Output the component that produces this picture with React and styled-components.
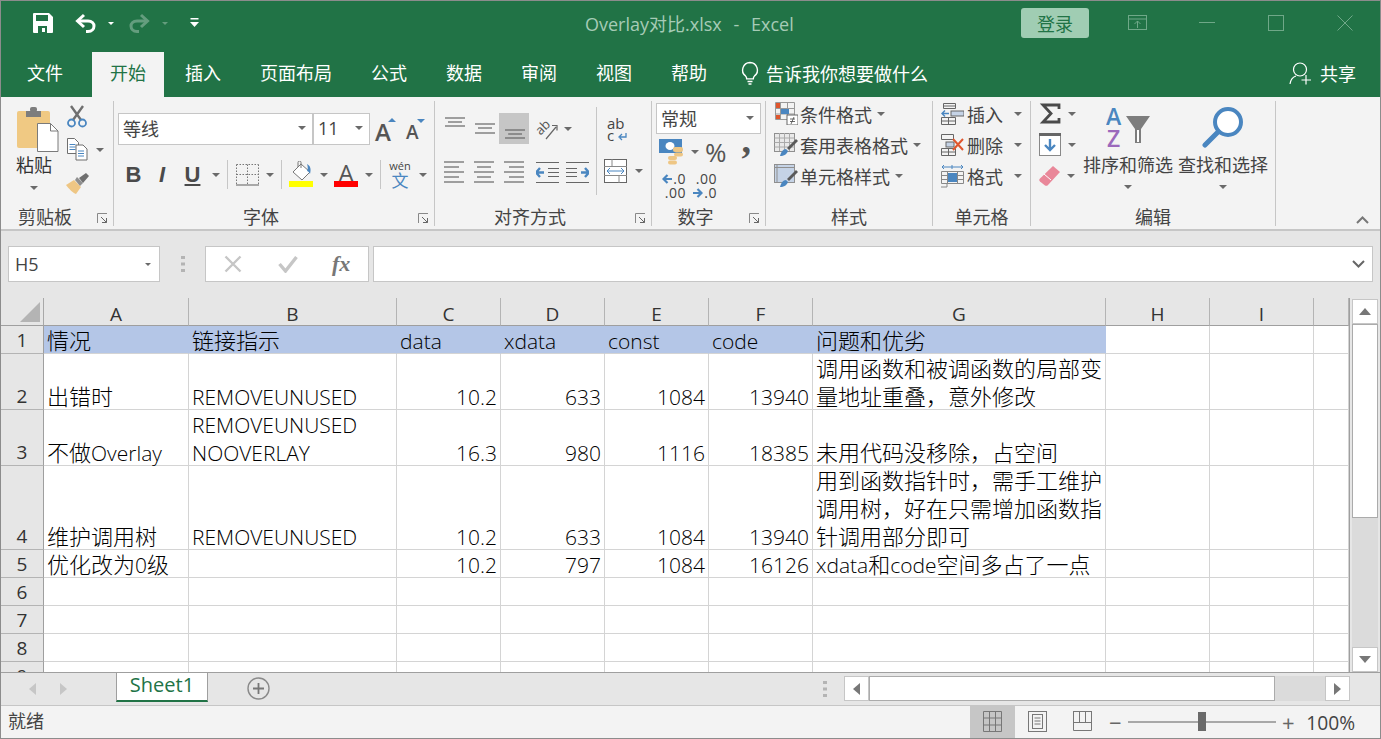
import React from 'react'
import styled, { createGlobalStyle } from 'styled-components'

const GlobalStyle = createGlobalStyle`
  html, body { margin: 0; padding: 0; width: 1381px; height: 739px; overflow: hidden; background: #fff; }
  * { box-sizing: border-box; }
  body { font-family: "Noto Sans CJK SC", "Open Sans", sans-serif; color: #444; }
`

const GREEN = '#217346'
const LINE = '#c6c6c6'
const BLUE = '#4a86c0'

const Window = styled.div`
  width: 1381px; height: 739px;
  border: 1px solid #8c8c8c;
  display: flex; flex-direction: column;
  background: #e6e6e6;
  overflow: hidden;
`
const TitleBar = styled.div`
  height: 44px; flex: none; background: ${GREEN};
  display: flex; align-items: center;
`
const Qat = styled.div`
  width: 584px; flex: none; height: 100%;
  padding-left: 32px;
  display: flex; align-items: center;
`
const QatSlot = styled.div`
  display: flex; align-items: center; justify-content: center;
  margin-left: ${p => p.$ml || 0}px;
  opacity: ${p => p.$dim ? 0.3 : 1};
`
const Title = styled.div`
  font-size: 18px; color: #a6cbb6; white-space: pre; word-spacing: 1.2px;
  font-family: "Open Sans", "Noto Sans CJK SC", sans-serif;
`
const WinControls = styled.div`
  margin-left: auto; display: flex; align-items: center; height: 100%;
`
const SignIn = styled.div`
  width: 68px; height: 30px; border-radius: 3px; background: #a0cdb3; color: ${GREEN};
  font-size: 18px; line-height: 30px; text-align: center;
`
const WinBtn = styled.div`
  width: ${p => p.$w || 69}px; display: flex; align-items: center; justify-content: center;
  margin-left: ${p => p.$ml || 0}px;
`
const TabBar = styled.div`
  height: 52px; flex: none; background: ${GREEN};
  display: flex; align-items: flex-end; padding-left: 8px; gap: 3px;
`
const Tab = styled.div`
  height: 45px; padding: 0 18px; font-size: 18px; line-height: 41px;
  color: ${p => p.$active ? GREEN : '#fff'};
  background: ${p => p.$active ? '#f3f3f3' : 'transparent'};
  margin-right: ${p => p.$mr || 0}px;
`
const TellMe = styled.div`
  height: 45px; margin-left: 12px; display: flex; align-items: center; gap: 6px;
  padding-bottom: 3px;
  color: #fff; font-size: 18px;
`
const Share = styled.div`
  height: 45px; margin-left: auto; padding-right: 24px; padding-bottom: 3px;
  display: flex; align-items: center; gap: 8px;
  color: #fff; font-size: 18px;
`
const Ribbon = styled.div`
  height: 134px; flex: none; background: #f3f3f3;
  border-bottom: 2px solid ${LINE};
  display: flex; padding-top: 4px;
  position: relative;
`
const Group = styled.div`
  width: ${p => p.$w}px; height: 125px; flex: none;
  border-right: 1px solid ${LINE};
  display: flex; flex-direction: column;
  position: relative;
`
const GroupBody = styled.div`
  flex: 1; display: flex; min-height: 0;
`
const GroupLabel = styled.div`
  height: 20px; line-height: 20px; font-size: 18px; text-align: center; color: #444;
  padding-right: ${p => p.$pr || 0}px;
`
const Launcher = styled.div`
  position: absolute; right: 5px; bottom: 2px; width: 11px; height: 11px; display: flex;
`
const Collapse = styled.div`
  position: absolute; right: 11px; bottom: 5px; display: flex;
`
const Caret = styled.div`
  flex: none; width: 0; height: 0;
  border-left: ${p => p.$s || 4}px solid transparent;
  border-right: ${p => p.$s || 4}px solid transparent;
  border-top: ${p => p.$s || 4}px solid ${p => p.$c || '#6a6a6a'};
  margin-left: ${p => p.$ml || 0}px;
  margin-top: ${p => p.$mt || 0}px;
`
const PasteCol = styled.div`
  width: 42px; margin-left: 16px; padding-top: 5px; flex: none;
  display: flex; flex-direction: column; align-items: flex-start;
`
const PasteText = styled.div`
  font-size: 18px; line-height: 24px; white-space: nowrap; color: #333; margin-left: -1px;
`
const PasteCaret = styled.div`
  width: 36px; display: flex; justify-content: center; margin-top: 10px; margin-left: -1px;
`
const ClipTools = styled.div`
  margin-left: 8px; padding-top: 4px;
  display: flex; flex-direction: column; gap: 10px;
`
const ClipTool = styled.div`
  height: 23px; display: flex; align-items: center; margin-left: ${p => p.$ml || 0}px;
`
const FontCol = styled.div`
  padding: 12px 0 0 4px; display: flex; flex-direction: column; gap: 15px;
`
const Row = styled.div`
  display: flex; align-items: center; height: ${p => p.$h ? p.$h + 'px' : 'auto'};
  margin-left: ${p => p.$ml || 0}px;
  margin-top: ${p => p.$mt || 0}px;
`
const SelectBox = styled.div`
  width: ${p => p.$w}px; height: ${p => p.$h || 32}px; flex: none;
  background: #fff; border: 1px solid ${LINE};
  display: flex; align-items: center; padding: 0 6px 2px 4px;
  font-size: 18px; color: #444;
  justify-content: space-between;
`
const SizeText = styled.span`
  font-family: "Open Sans", sans-serif; font-size: 18px;
`
const BigA = styled.div`
  position: relative; width: 21px; height: 32px; margin-left: ${p => p.$ml || 0}px;
  font: 600 ${p => p.$fs}px/38px "Open Sans", sans-serif; color: #555; text-align: left;
`
const MiniTri = styled.i`
  position: absolute; right: ${p => p.$right || 0}px; top: ${p => p.$top}px; width: 0; height: 0;
  border-left: 4px solid transparent; border-right: 4px solid transparent;
  ${p => p.$up ? `border-bottom: 4px solid ${BLUE};` : `border-top: 4px solid ${BLUE};`}
`
const StyleGlyph = styled.span`
  width: ${p => p.$w}px; margin-left: ${p => p.$ml || 0}px; text-align: center; color: #4a4a4a;
  font: ${p => p.$italic ? 'italic' : 'normal'} 700 22px/28px "Liberation Sans", sans-serif;
  text-decoration: ${p => p.$under ? 'underline' : 'none'};
`
const VSep = styled.div`
  width: 1px; height: ${p => p.$h || 29}px; background: ${LINE}; flex: none;
  margin-left: ${p => p.$ml || 0}px;
  margin-right: ${p => p.$mr || 0}px;
`
const Swatch = styled.div`
  position: relative; width: 24px; height: 28px; margin-left: ${p => p.$ml || 0}px; flex: none;
  display: flex; justify-content: center;
  &::after {
    content: ''; position: absolute; left: 0; right: 0; bottom: 2px; height: 6px; background: ${p => p.$color};
  }
`
const SwatchA = styled.span`
  font: 400 24px/24px "Open Sans", sans-serif; color: #555;
`
const Wen = styled.div`
  width: 22px; margin-left: ${p => p.$ml || 0}px; text-align: center; display: flex; flex-direction: column; align-items: center;
`
const WenTop = styled.span`
  font: 400 11px/11px "Open Sans", sans-serif; color: #444;
`
const WenBottom = styled.span`
  font-size: 17px; line-height: 18px; color: ${BLUE};
`
const AlignCol = styled.div`
  width: 161px; flex: none; padding: 12px 0 0 4px;
`
const AlignSlot = styled.div`
  width: 30px; height: ${p => p.$h || 31}px; flex: none;
  display: flex; align-items: center; justify-content: center;
  background: ${p => p.$on ? '#c6c6c6' : 'transparent'};
  margin-left: ${p => p.$ml || 0}px;
`
const WrapCol = styled.div`
  margin-top: 6px; height: 88px; border-left: 1px solid ${LINE}; padding-top: 10px;
  display: flex; flex-direction: column; flex: 1;
`
const WrapText = styled.div`
  margin-left: 10px; width: 24px; text-align: left;
  font: 400 15px/12px "Open Sans", sans-serif; color: #444;
`
const WrapMark = styled.span`
  display: inline-block;
`
const MergeRow = styled.div`
  margin: 18px 0 0 7px; display: flex; align-items: center;
`
const NumCol = styled.div`
  padding: 2px 0 0 4px; display: flex; flex-direction: column; width: 100%;
`
const Percent = styled.span`
  font: 400 26px/26px "Open Sans", sans-serif; color: #555; margin-left: 6px;
`
const Comma = styled.span`
  font: 700 38px/26px "Liberation Serif", serif; color: #555; margin-left: 15px; position: relative; top: -12px;
`
const DecBlock = styled.div`
  width: 28px; margin-left: ${p => p.$ml || 0}px; display: flex; flex-direction: column;
  font: 400 14px/14px "Open Sans", sans-serif; color: #444; text-align: right; letter-spacing: 0.5px;
`
const DecLine = styled.div`
  display: flex; justify-content: flex-end; align-items: center; gap: 1px; height: 14px;
`
const ListCol = styled.div`
  padding: 0 0 0 8px; margin-top: -3px; width: ${p => p.$w ? p.$w + 'px' : 'auto'}; flex: none;
  display: flex; flex-direction: column;
`
const ListRow = styled.div`
  height: 31px; display: flex; align-items: center; font-size: 18px; color: #444; white-space: nowrap;
`
const ListIcon = styled.div`
  width: ${p => p.$w || 24}px; margin-right: ${p => p.$mr || 2}px; flex: none; display: flex; justify-content: center;
`
const BigTool = styled.div`
  width: 90px; margin-left: ${p => p.$ml || 0}px; flex: none;
  display: flex; flex-direction: column; align-items: center;
`
const BigIcon = styled.div`
  height: 50px; padding-top: 5px; display: flex; align-items: flex-start; justify-content: center;
`
const BigText = styled.div`
  font-size: 18px; line-height: 24px; white-space: nowrap; color: #444; margin-top: 1px;
`
const FormulaBar = styled.div`
  height: 67px; flex: none; padding: 15px 7px 0 7px;
  display: flex; align-items: flex-start; background: #e6e6e6;
`
const NameBox = styled.div`
  width: 152px; height: 36px; background: #fff; border: 1px solid ${LINE};
  display: flex; align-items: center; justify-content: space-between; padding: 0 8px 0 6px;
  font: 400 18px "Open Sans", sans-serif; color: #444;
`
const Grip = styled.div`
  width: 45px; height: 36px; flex: none; display: flex; align-items: center; justify-content: center;
`
const FxBox = styled.div`
  width: 164px; height: 36px; background: #fff; border: 1px solid ${LINE};
  display: flex; align-items: center; padding-left: 18px; gap: 36px;
`
const FxText = styled.span`
  font: italic 700 22px "Liberation Serif", serif; color: #777; margin-left: -2px;
`
const FormulaInput = styled.div`
  flex: 1; height: 36px; margin-left: 4px; background: #fff; border: 1px solid ${LINE};
  display: flex; align-items: center; justify-content: flex-end; padding-right: 7px;
`
const SheetArea = styled.div`
  height: 374px; flex: none; display: flex;
`
const Grid = styled.div`
  width: 1349px; height: 374px; flex: none; overflow: hidden; background: #fff;
  display: grid;
  grid-template-columns: 43px 145px 208px 104px 104px 104px 104px 293px 104px 104px 35px;
  grid-template-rows: 28px 28px 56px 56px 84px 28px 28px 28px 28px 28px;
  border-right: 1px solid #9f9f9f;
`
const Corner = styled.div`
  background: #e6e6e6; border-right: 1px solid #a8a8a8; border-bottom: 1px solid #9f9f9f;
  display: flex; align-items: flex-end; justify-content: flex-end; padding: 0 3px 3px 0;
`
const ColHead = styled.div`
  background: #e6e6e6; border-right: 1px solid #b4b4b4; border-bottom: 1px solid #9f9f9f;
  padding-top: 3px;
  text-align: center; font: 400 19px/27px "Open Sans", sans-serif; color: #333;
`
const RowHead = styled.div`
  background: #e6e6e6; border-right: 1px solid #9f9f9f; border-bottom: 1px solid #b4b4b4;
  display: flex; align-items: flex-end; justify-content: center; font: 400 19px/25px "Open Sans", sans-serif; color: #333;
`
const Cell = styled.div`
  background: ${p => p.$fill ? '#b4c6e7' : '#fff'};
  border-right: 1px solid ${p => p.$fill ? '#b4c6e7' : '#d4d4d4'};
  border-bottom: 1px solid #d4d4d4;
  padding: 0 3px 0 3px; color: #000; white-space: nowrap;
  display: flex; flex-direction: column; justify-content: flex-end;
  align-items: ${p => p.$num ? 'flex-end' : 'flex-start'};
  font: 300 21px/28px "Open Sans", sans-serif;
`
const CellLine = styled.div`
  height: 28px; line-height: 29px;
`
const Han = styled.span`
  font-family: "Noto Sans CJK SC", sans-serif; font-size: 22px; font-weight: 300;
`
const VScroll = styled.div`
  flex: 1; padding: 1px 2px 0 2px; display: flex; flex-direction: column; background: #e6e6e6; position: relative;
`
const ScrollBtn = styled.div`
  flex: none; width: ${p => p.$w ? p.$w + 'px' : '100%'}; height: ${p => p.$h || 25}px; background: #fff; border: 1px solid ${LINE};
  display: flex; align-items: center; justify-content: center;
`
const VThumb = styled.div`
  height: 194px; flex: none; background: #fff; border: 1px solid #ababab;
`
const VTrack = styled.div`
  flex: 1; background: #dbdbdb;
`
const SheetBar = styled.div`
  height: 33px; flex: none; background: #e6e6e6; border-top: 1px solid #9f9f9f;
  display: flex; align-items: flex-start;
`
const SheetNav = styled.div`
  width: 115px; height: 100%; padding-left: 28px; display: flex; align-items: center; gap: 24px; flex: none;
`
const NavTri = styled.div`
  width: 0; height: 0; border-top: 6px solid transparent; border-bottom: 6px solid transparent;
  ${p => p.$left ? 'border-right: 7px solid #c6c6c6;' : 'border-left: 7px solid #c6c6c6;'}
`
const SheetTab = styled.div`
  width: 92px; height: 29px; background: #fff; color: ${GREEN};
  border-left: 1px solid #9f9f9f; border-right: 1px solid #9f9f9f; border-bottom: 2px solid ${GREEN};
  text-align: center; font: 400 20px/23px "Open Sans", sans-serif; flex: none;
`
const AddSheet = styled.div`
  width: 100px; height: 100%; display: flex; align-items: center; padding-left: 39px; flex: none; padding-bottom: 2px;
`
const HGrip = styled.div`
  margin-left: auto; width: 29px; height: 100%; display: flex; align-items: center; justify-content: flex-start; padding-left: 8px;
`
const HScroll = styled.div`
  width: 506px; height: 25px; margin-top: 3px; margin-right: 30px; display: flex; flex: none; background: #dbdbdb;
`
const HThumb = styled.div`
  width: 406px; height: 100%; background: #fff; border: 1px solid #ababab; flex: none;
`
const StatusBar = styled.div`
  flex: 1; background: #f3f3f3; border-top: 1px solid ${LINE};
  display: flex; align-items: center; padding-left: 7px; font-size: 18px; color: #444;
`
const StatusText = styled.span`
  position: relative; top: -2px;
`
const StatusRight = styled.div`
  margin-left: auto; display: flex; align-items: center; height: 100%;
`
const ViewBtn = styled.div`
  width: 45px; height: 100%; display: flex; align-items: center; justify-content: center;
  padding-bottom: 2px;
  background: ${p => p.$on ? '#c6c6c6' : 'transparent'};
`
const ZoomTrack = styled.div`
  position: relative; width: 148px; height: 2px; background: #a8a8a8; margin: 0 5px 0 6px;
`
const ZoomThumb = styled.div`
  position: absolute; left: 70px; top: -9px; width: 8px; height: 19px; background: #6a6a6a;
`
const ZoomSign = styled.span`
  font: 400 22px/22px "Open Sans", sans-serif; color: #666; width: 14px; text-align: center;
  margin-left: ${p => p.$ml || 0}px;
`
const ZoomPct = styled.span`
  font: 400 19.2px "Open Sans", sans-serif; color: #444; margin: 0 25px 0 11px;
`

const Svg = ({ w, h, children }) => (
  <svg width={w} height={h} viewBox={`0 0 ${w} ${h}`} fill="none" style={{ display: 'block', flex: 'none' }}>{children}</svg>
)

const SaveIcon = () => (
  <Svg w={20} h={20}>
    <path d="M1 0h15l4 4v15a1 1 0 0 1-1 1H1a1 1 0 0 1-1-1V1a1 1 0 0 1 1-1z" fill="#fff" />
    <rect x="3" y="2" width="12" height="6" fill={GREEN} />
    <rect x="5" y="13" width="9" height="7" fill={GREEN} />
    <rect x="9" y="15" width="3" height="4" fill="#fff" />
  </Svg>
)
const UndoIcon = ({ flip }) => (
  <Svg w={22} h={20}>
    <g transform={flip ? 'translate(22 0) scale(-1 1)' : undefined} stroke="#fff" strokeWidth="3" fill="none">
      <path d="M9 2L2.5 8l6.5 6" />
      <path d="M3 8h10c4 0 6 2.5 6 5s-2 5.5-6 5.5H11" />
    </g>
  </Svg>
)
const QatMore = () => (
  <Svg w={9} h={10}>
    <rect x="0.5" y="0" width="8" height="1.5" fill="#fff" />
    <path d="M0 4h9L4.5 9z" fill="#fff" />
  </Svg>
)
const RibbonOpts = () => (
  <Svg w={20} h={16}>
    <rect x="0.5" y="0.5" width="18" height="14" stroke="#6fa888" />
    <path d="M0 4h19M9.5 13V6M6.5 9l3-3 3 3" stroke="#6fa888" />
  </Svg>
)
const MinIcon = () => <Svg w={16} h={2}><rect width="16" height="1" fill="#6fa888" /></Svg>
const MaxIcon = () => <Svg w={16} h={16}><rect x="0.5" y="0.5" width="15" height="15" stroke="#6fa888" /></Svg>
const CloseIcon = () => <Svg w={16} h={16}><path d="M0.5 0.5l15 15M15.5 0.5l-15 15" stroke="#6fa888" /></Svg>
const Bulb = () => (
  <Svg w={20} h={24}>
    <path d="M10 1.5a7.5 7.5 0 0 0-4.5 13.4c.9.8 1.2 1.6 1.2 3h6.6c0-1.4.3-2.2 1.2-3A7.5 7.5 0 0 0 10 1.5z" stroke="#fff" strokeWidth="1.4" />
    <path d="M7.5 20.5h5M8.5 23h3" stroke="#fff" strokeWidth="1.4" />
  </Svg>
)
const UserAdd = () => (
  <Svg w={23} h={23}>
    <circle cx="11" cy="7.5" r="6.5" stroke="#fff" strokeWidth="1.2" />
    <path d="M1 22c.5-4 3-7 6-8" stroke="#fff" strokeWidth="1.2" />
    <path d="M17 13v9.5M12.5 18h9.5" stroke="#fff" strokeWidth="1.2" />
  </Svg>
)
const PasteIcon = () => (
  <Svg w={42} h={46}>
    <rect x="0" y="5" width="33" height="37" rx="2" fill="#f0c983" />
    <rect x="9" y="5" width="15" height="6" fill="#7d7d7d" />
    <rect x="13" y="1" width="7" height="5" rx="2" fill="#7d7d7d" />
    <path d="M20.5 17.5h13l7.5 7.5v20.5H20.5z" fill="#fff" stroke="#7a7a7a" />
    <path d="M33.5 17.5v7.5H41" stroke="#7a7a7a" />
  </Svg>
)
const ScissorsIcon = () => (
  <Svg w={20} h={23}>
    <path d="M4 1l10 14M16 1L6 15" stroke="#6f6f6f" strokeWidth="2.4" />
    <circle cx="4.5" cy="18" r="3.5" stroke={BLUE} strokeWidth="1.8" />
    <circle cx="15.5" cy="18" r="3.5" stroke={BLUE} strokeWidth="1.8" />
  </Svg>
)
const Doc = ({ x, y }) => (
  <g transform={`translate(${x} ${y})`}>
    <path d="M.5.5h7l4 4v11H.5z" fill="#fff" stroke="#6f6f6f" />
    <path d="M2.5 6.5h6M2.5 9h6M2.5 11.5h6" stroke={BLUE} />
  </g>
)
const CopyIcon = () => <Svg w={21} h={23}><Doc x={0} y={0} /><Doc x={8.5} y={6.5} /></Svg>
const BrushIcon = () => (
  <Svg w={24} h={22}>
    <path d="M0 13l8-5 7 7-5 7c-3-1-7-5-10-9z" fill="#eec684" />
    <path d="M9 8l2-3 6 6-3 3z" fill="#8f8f8f" />
    <path d="M13 6l7-5 3 3-6 7z" fill="#6f6f6f" />
  </Svg>
)
const BorderIcon = () => (
  <Svg w={23} h={22}>
    <path d="M.5.5h22M.5.5v20M22.5.5v20M11.5.5v20M.5 10.5h22" stroke="#777" strokeDasharray="1.5 1.5" />
    <path d="M0 21h23" stroke="#777" strokeWidth="1.2" />
  </Svg>
)
const FillIcon = () => (
  <Svg w={24} h={21}>
    <path d="M12 3l9 8-8 8-9-8z" fill="#fff" stroke="#777" />
    <path d="M9 6V1.5a1.5 1.5 0 0 1 3 0V7" stroke="#777" />
    <path d="M18 3c3 1.5 4.5 4.5 3 10-1-2-2-3-3-3 1-2 1-4 0-7z" fill={BLUE} />
  </Svg>
)
const AlignIcon = ({ lines }) => (
  <Svg w={22} h={26}>
    {lines.map(([a, b, y], i) => <path key={i} d={`M${a} ${y}h${b - a}`} stroke="#666" strokeWidth="1.2" />)}
  </Svg>
)
const OrientIcon = () => (
  <Svg w={22} h={22}>
    <text x="0" y="13" transform="rotate(-45 8 10)" fontFamily="Open Sans" fontSize="13" fill="#555">ab</text>
    <path d="M10 21L20 9M16 7.5l5 0 0 5" stroke="#666" strokeWidth="1.2" />
  </Svg>
)
const IndentIcon = ({ flip }) => (
  <Svg w={23} h={26}>
    <g transform={flip ? 'translate(23 0) scale(-1 1)' : undefined}>
      <path d="M0 3.5h23M0 23.5h23M12 9.5h11M12 13.5h11M12 17.5h11" stroke="#666" strokeWidth="1.2" />
      <path d="M0 13.5h8M4 9l-4 4.5 4 4.5" stroke={BLUE} strokeWidth="2.4" />
    </g>
  </Svg>
)
const WrapArrow = () => (
  <Svg w={9} h={8}><path d="M8 0v4H2M4 1L1 4l3 3" stroke={BLUE} strokeWidth="1.3" /></Svg>
)
const MergeIcon = () => (
  <Svg w={23} h={24}>
    <rect x=".5" y=".5" width="22" height="23" fill="#fff" stroke="#666" />
    <path d="M0 7.5h23M0 16.5h23M8 0v7M15 16v8" stroke="#888" />
    <rect x="1" y="8" width="21" height="8" fill="#fff" />
    <path d="M3 12h17M6 9l-3 3 3 3M17 9l3 3-3 3" stroke={BLUE} />
  </Svg>
)
const MoneyIcon = () => (
  <Svg w={25} h={26}>
    <rect x="0" y="0" width="23" height="14" fill={BLUE} />
    <ellipse cx="11" cy="7" rx="4.5" ry="4" fill="#fff" />
    <rect x="14" y="8" width="10" height="5" rx="2" fill="#eec684" />
    <rect x="15" y="13.5" width="9" height="4" rx="2" fill="#eec684" />
    <rect x="9" y="17" width="9" height="4" rx="2" fill="#eec684" />
    <rect x="9" y="21.5" width="9" height="4" rx="2" fill="#eec684" />
  </Svg>
)
const SmallArrow = ({ left }) => (
  <Svg w={10} h={10}>
    {left
      ? <path d="M10 5H2M5.5 1L1.5 5l4 4" stroke={BLUE} strokeWidth="2.2" />
      : <path d="M0 5h8M4.5 1l4 4-4 4" stroke={BLUE} strokeWidth="2.2" />}
  </Svg>
)
const CondIcon = () => (
  <Svg w={23} h={23}>
    <path d="M.5.5h19v17H.5zM.5 6.5h19M.5 12h19M5.5 0v18M12.5 0v18" stroke="#999" />
    <rect x="1" y="1" width="4" height="5" fill="#e0562d" />
    <rect x="6" y="7" width="8" height="5" fill={BLUE} />
    <rect x="1" y="13" width="4" height="4" fill="#e0562d" />
    <rect x="12" y="13" width="11" height="10" fill="#fff" stroke="#666" />
    <path d="M15 17h5M15 19.5h5M19 15l-3 7" stroke="#444" strokeWidth=".8" />
  </Svg>
)
const TableBrush = ({ plain }) => (
  <Svg w={24} h={24}>
    <rect x=".5" y=".5" width="20" height="18" fill={plain ? '#c5d3e6' : '#e9e9e9'} stroke="#8f8f8f" />
    {plain
      ? <path d="M.5 3.5h20M3 .5v18" stroke="#8f8f8f" />
      : <path d="M.5 5h20M.5 9.5h20M.5 14h20M5.5 0v18M10.5 0v18M15.5 0v18" stroke="#aaa" />}
    <path d="M6 23c1-4 3-7 6-7l2 2c-1 3-4 5-8 5z" fill={BLUE} />
    <path d="M13 15l9-9 2 2-9 9z" fill="#5a5a5a" />
  </Svg>
)
const InsCell = () => (
  <Svg w={23} h={22}>
    <path d="M2.5 .5h12v5h-12zM.5 14.5h14v7H.5zM7.5 14.5v7M.5 18h14M2.5 3h12" stroke="#666" />
    <rect x="10" y="8" width="13" height="5" fill="#c5d3e6" stroke="#666" />
    <path d="M8 10.5H1M4 7.5l-3 3 3 3" stroke={BLUE} strokeWidth="1.5" />
  </Svg>
)
const DelCell = () => (
  <Svg w={24} h={22}>
    <path d="M.5 .5h12v5H.5zM.5 14.5h14v7H.5zM7.5 14.5v7M.5 18h14" stroke="#666" />
    <rect x="5" y="8" width="8" height="5" fill="#c5d3e6" stroke="#666" />
    <path d="M12 5l10 11M22 5L12 16" stroke="#e0562d" strokeWidth="2" />
  </Svg>
)
const FmtCell = () => (
  <Svg w={23} h={24}>
    <path d="M1 3h21M3 1L1 3l2 2M20 1l2 2-2 2M11 1v4" stroke={BLUE} />
    <path d="M.5 7.5h22v12H.5zM.5 11.5h22M.5 15.5h22M6.5 7v13M16.5 7v13M6 20v3H0" stroke="#888" />
    <rect x="7" y="9" width="9" height="9" fill={BLUE} />
  </Svg>
)
const SigmaIcon = () => (
  <Svg w={22} h={21}>
    <path d="M20 6V2H4l8 8.5L4 19h16v-4" stroke="#4a4a4a" strokeWidth="2.8" />
  </Svg>
)
const FillDown = () => (
  <Svg w={22} h={23}>
    <rect x=".5" y=".5" width="21" height="22" fill="#fff" stroke="#888" />
    <rect x="0" y="0" width="22" height="3" fill="#666" />
    <path d="M11 6v11M6 12l5 5 5-5" stroke={BLUE} strokeWidth="2.4" />
  </Svg>
)
const Eraser = () => (
  <Svg w={21} h={20}>
    <path d="M14 0l7 6-12 13c-1 1-2 1-3 .5l-5-4c-1-1-1-2 0-3z" fill="#e98799" />
    <path d="M5 8l7 6" stroke="#fff" />
  </Svg>
)
const SortIcon = () => (
  <Svg w={44} h={42}>
    <text x="0" y="19" fontFamily="Open Sans" fontWeight="600" fontSize="23" fill={BLUE}>A</text>
    <text x="1" y="41" fontFamily="Open Sans" fontWeight="600" fontSize="23" fill="#9b69bc">Z</text>
    <path d="M20 10h24l-9 13v14h-6V23z" fill="#7d7d7d" />
    <path d="M31 24h2v12h-2z" fill="#fff" />
  </Svg>
)
const FindIcon = () => (
  <Svg w={42} h={42}>
    <circle cx="26" cy="16" r="13" fill="#fff" stroke={BLUE} strokeWidth="4" />
    <path d="M16 26L3 39" stroke={BLUE} strokeWidth="5" strokeLinecap="round" />
  </Svg>
)
const LauncherIcon = () => (
  <Svg w={11} h={11}>
    <path d="M.5 10V.5H10" stroke="#888" />
    <path d="M4 4l5.5 5.5M9.5 5v4.5H5" stroke="#666" />
  </Svg>
)
const ChevronUp = () => <Svg w={13} h={8}><path d="M1 7l5.5-5.5L12 7" stroke="#777" strokeWidth="2" /></Svg>
const ChevronDown = () => <Svg w={13} h={8}><path d="M1 1l5.5 5.5L12 1" stroke="#666" strokeWidth="2" /></Svg>
const GripDots = ({ h }) => (
  <Svg w={4} h={h}>
    <rect y="0" width="4" height="3" fill="#b4b4b4" />
    <rect y={(h - 3) / 2} width="4" height="3" fill="#b4b4b4" />
    <rect y={h - 3} width="4" height="3" fill="#b4b4b4" />
  </Svg>
)
const CancelIcon = () => <Svg w={18} h={18}><path d="M1.5 1.5l15 15M16.5 1.5l-15 15" stroke="#c6c6c6" strokeWidth="2.4" /></Svg>
const CheckIcon = () => <Svg w={20} h={18}><path d="M1.5 9l6 7L18.5 2" stroke="#c6c6c6" strokeWidth="3.4" /></Svg>
const CornerTri = () => <Svg w={20} h={20}><path d="M20 0v20H0z" fill="#b4b4b4" /></Svg>
const TriUp = () => <Svg w={12} h={7}><path d="M6 0l6 7H0z" fill="#777" /></Svg>
const TriDown = () => <Svg w={12} h={7}><path d="M6 7l6-7H0z" fill="#777" /></Svg>
const TriLeft = () => <Svg w={7} h={12}><path d="M0 6l7-6v12z" fill="#777" /></Svg>
const TriRight = () => <Svg w={7} h={12}><path d="M7 6L0 0v12z" fill="#777" /></Svg>
const AddCircle = () => (
  <Svg w={23} h={23}>
    <circle cx="11.5" cy="11.5" r="10.5" stroke="#8a8a8a" strokeWidth="1.4" />
    <path d="M11.5 6v11M6 11.5h11" stroke="#777" strokeWidth="1.8" />
  </Svg>
)
const NormalView = () => (
  <Svg w={19} h={21}>
    <path d="M.5.5h18v20H.5zM6.5 0v21M12.5 0v21M0 7h19M0 14h19" stroke="#777" />
  </Svg>
)
const PageView = () => (
  <Svg w={19} h={21}>
    <rect x=".5" y=".5" width="18" height="20" stroke="#777" />
    <rect x="4.5" y="3.5" width="10" height="14" stroke="#777" />
    <path d="M6.5 7h6M6.5 10h6M6.5 13h6" stroke="#777" />
  </Svg>
)
const BreakView = () => (
  <Svg w={19} h={20}>
    <path d="M.5 0v19.5h18V0M.5 11.5h18M6.5 0v11.5M12.5 0v11.5M0 .5h19" stroke="#777" />
  </Svg>
)

const TOP = [[2, 22, 2], [5, 19, 6], [2, 22, 10]]
const MID = [[2, 22, 8], [5, 19, 12], [2, 22, 17]]
const BOT = [[2, 22, 14], [5, 19, 18], [2, 22, 22]]
const LEFT = [[1, 21, 3], [1, 21, 8], [1, 21, 13], [1, 21, 18], [1, 21, 23]]
const CENTER = [[1, 21, 3], [4, 18, 8], [1, 21, 13], [4, 18, 18], [1, 21, 23]]

const TABS = ['插入', '页面布局', '公式', '数据', '审阅', '视图', '帮助']
const COLS = ['A', 'B', 'C', 'D', 'E', 'F', 'G', 'H', 'I', '']
const ROWS = [
  { n: 1, fill: true, cells: ['情况', '链接指示', 'data', 'xdata', 'const', 'code', '问题和优劣'] },
  { n: 2, cells: ['出错时', 'REMOVEUNUSED', 10.2, 633, 1084, 13940, '调用函数和被调函数的局部变\n量地址重叠，意外修改'] },
  { n: 3, cells: ['不做Overlay', 'REMOVEUNUSED\nNOOVERLAY', 16.3, 980, 1116, 18385, '未用代码没移除，占空间'] },
  { n: 4, cells: ['维护调用树', 'REMOVEUNUSED', 10.2, 633, 1084, 13940, '用到函数指针时，需手工维护\n调用树，好在只需增加函数指\n针调用部分即可'] },
  { n: 5, cells: ['优化改为0级', '', 10.2, 797, 1084, 16126, 'xdata和code空间多占了一点'] },
  { n: 6, cells: [] }, { n: 7, cells: [] }, { n: 8, cells: [] }, { n: 9, cells: [] }, { n: 10, cells: [] },
]

// 中文用单独的字号，西文宽度才对得上；空的 Han 让每行基线一致
const mixText = (str) => str.split(/([\u4e00-\u9fff，]+)/).map((part, i) =>
  /[\u4e00-\u9fff，]/.test(part) ? <Han key={i}>{part}</Han> : part
)

const SheetCell = ({ value, fill }) => {
  const isNum = typeof value === 'number'
  const lines = value === undefined || value === '' ? [] : String(value).split('\n')
  return (
    <Cell $fill={fill} $num={isNum}>
      {lines.map((l, i) => <CellLine key={i}><Han />{mixText(l)}</CellLine>)}
    </Cell>
  )
}

const App = () => {
  return (
    <Window>
      <GlobalStyle />
      <TitleBar>
        <Qat>
          <QatSlot><SaveIcon /></QatSlot>
          <QatSlot $ml={22}><UndoIcon /></QatSlot>
          <QatSlot $ml={11}><Caret $s={3.5} $c="#fff" /></QatSlot>
          <QatSlot $ml={14} $dim><UndoIcon flip /></QatSlot>
          <QatSlot $ml={12} $dim><Caret $s={3.5} $c="#fff" /></QatSlot>
          <QatSlot $ml={22}><QatMore /></QatSlot>
        </Qat>
        <Title>Overlay对比.xlsx  -  Excel</Title>
        <WinControls>
          <SignIn>登录</SignIn>
          <WinBtn $ml={14}><RibbonOpts /></WinBtn>
          <WinBtn><MinIcon /></WinBtn>
          <WinBtn><MaxIcon /></WinBtn>
          <WinBtn><CloseIcon /></WinBtn>
          <WinBtn $w={1} />
        </WinControls>
      </TitleBar>

      <TabBar>
        <Tab $mr={8}>文件</Tab>
        <Tab $active>开始</Tab>
        {TABS.map(t => <Tab key={t}>{t}</Tab>)}
        <TellMe><Bulb />告诉我你想要做什么</TellMe>
        <Share><UserAdd />共享</Share>
      </TabBar>

      <Ribbon>
        <Group $w={113}>
          <GroupBody>
            <PasteCol>
              <PasteIcon />
              <PasteText>粘贴</PasteText>
              <PasteCaret><Caret /></PasteCaret>
            </PasteCol>
            <ClipTools>
              <ClipTool><ScissorsIcon /></ClipTool>
              <ClipTool><CopyIcon /><Caret $ml={8} /></ClipTool>
              <ClipTool $ml={-1}><BrushIcon /></ClipTool>
            </ClipTools>
          </GroupBody>
          <GroupLabel $pr={24}>剪贴板</GroupLabel>
          <Launcher><LauncherIcon /></Launcher>
        </Group>

        <Group $w={321}>
          <GroupBody>
            <FontCol>
              <Row>
                <SelectBox $w={195}>等线<Caret /></SelectBox>
                <SelectBox $w={57}><SizeText>11</SizeText><Caret /></SelectBox>
                <BigA $ml={5} $fs={24}>A<MiniTri $up $top={5} /></BigA>
                <BigA $ml={10} $fs={19}>A<MiniTri $top={6} $right={2} /></BigA>
              </Row>
              <Row $h={29}>
                <StyleGlyph $w={16} $ml={7.5}>B</StyleGlyph>
                <StyleGlyph $w={16} $ml={12.5} $italic>I</StyleGlyph>
                <StyleGlyph $w={17} $ml={14} $under>U</StyleGlyph>
                <Caret $ml={11} />
                <VSep $ml={7} $mr={8} />
                <BorderIcon />
                <Caret $ml={7} />
                <VSep $ml={7} />
                <Swatch $ml={7} $color="#ffff00"><FillIcon /></Swatch>
                <Caret $ml={7} />
                <Swatch $ml={6} $color="#ff0000"><SwatchA>A</SwatchA></Swatch>
                <Caret $ml={7} />
                <VSep $ml={7} />
                <Wen $ml={8}><WenTop>wén</WenTop><WenBottom>文</WenBottom></Wen>
                <Caret $ml={8} />
              </Row>
            </FontCol>
          </GroupBody>
          <GroupLabel $pr={26}>字体</GroupLabel>
          <Launcher><LauncherIcon /></Launcher>
        </Group>

        <Group $w={217}>
          <GroupBody>
            <AlignCol>
              <Row>
                <AlignSlot><AlignIcon lines={TOP} /></AlignSlot>
                <AlignSlot><AlignIcon lines={MID} /></AlignSlot>
                <AlignSlot $on><AlignIcon lines={BOT} /></AlignSlot>
                <AlignSlot $ml={3}><OrientIcon /></AlignSlot>
                <Caret $ml={2} />
              </Row>
              <Row $mt={14}>
                <AlignSlot $h={27}><AlignIcon lines={LEFT.map(([a, b, y], i) => [a, i % 2 ? b - 5 : b, y])} /></AlignSlot>
                <AlignSlot $h={27}><AlignIcon lines={CENTER} /></AlignSlot>
                <AlignSlot $h={27}><AlignIcon lines={LEFT.map(([a, b, y], i) => [i % 2 ? a + 5 : a, b, y])} /></AlignSlot>
                <AlignSlot $h={27} $ml={3}><IndentIcon /></AlignSlot>
                <AlignSlot $h={27}><IndentIcon flip /></AlignSlot>
              </Row>
            </AlignCol>
            <WrapCol>
              <WrapText>ab<br />c <WrapMark><WrapArrow /></WrapMark></WrapText>
              <MergeRow><MergeIcon /><Caret $ml={8} /></MergeRow>
            </WrapCol>
          </GroupBody>
          <GroupLabel $pr={26}>对齐方式</GroupLabel>
          <Launcher><LauncherIcon /></Launcher>
        </Group>

        <Group $w={114}>
          <GroupBody>
            <NumCol>
              <SelectBox $w={105} $h={31}>常规<Caret /></SelectBox>
              <Row $h={26} $ml={3} $mt={5}>
                <MoneyIcon />
                <Caret $ml={7} />
                <Percent>%</Percent>
                <Comma>,</Comma>
              </Row>
              <Row $ml={2} $mt={7}>
                <DecBlock>
                  <DecLine><SmallArrow left />.0</DecLine>
                  <DecLine>.00</DecLine>
                </DecBlock>
                <DecBlock $ml={3}>
                  <DecLine>.00</DecLine>
                  <DecLine><SmallArrow />.0</DecLine>
                </DecBlock>
              </Row>
            </NumCol>
          </GroupBody>
          <GroupLabel $pr={26}>数字</GroupLabel>
          <Launcher><LauncherIcon /></Launcher>
        </Group>

        <Group $w={167}>
          <GroupBody>
            <ListCol>
              <ListRow><ListIcon><CondIcon /></ListIcon>条件格式<Caret $ml={5} /></ListRow>
              <ListRow><ListIcon><TableBrush /></ListIcon>套用表格格式<Caret $ml={5} /></ListRow>
              <ListRow><ListIcon><TableBrush plain /></ListIcon>单元格样式<Caret $ml={5} /></ListRow>
            </ListCol>
          </GroupBody>
          <GroupLabel>样式</GroupLabel>
        </Group>

        <Group $w={98}>
          <GroupBody>
            <ListCol>
              <ListRow><ListIcon $w={23} $mr={3}><InsCell /></ListIcon>插入<Caret $ml={11} /></ListRow>
              <ListRow><ListIcon $w={23} $mr={3}><DelCell /></ListIcon>删除<Caret $ml={11} /></ListRow>
              <ListRow><ListIcon $w={23} $mr={3}><FmtCell /></ListIcon>格式<Caret $ml={11} /></ListRow>
            </ListCol>
          </GroupBody>
          <GroupLabel>单元格</GroupLabel>
        </Group>

        <Group $w={245}>
          <GroupBody>
            <ListCol $w={52}>
              <ListRow><SigmaIcon /><Caret $ml={7} /></ListRow>
              <ListRow><FillDown /><Caret $ml={7} /></ListRow>
              <ListRow><Eraser /><Caret $ml={7} /></ListRow>
            </ListCol>
            <BigTool>
              <BigIcon><SortIcon /></BigIcon>
              <BigText>排序和筛选</BigText>
              <Caret $mt={9} />
            </BigTool>
            <BigTool $ml={5}>
              <BigIcon><FindIcon /></BigIcon>
              <BigText>查找和选择</BigText>
              <Caret $mt={9} />
            </BigTool>
          </GroupBody>
          <GroupLabel>编辑</GroupLabel>
        </Group>
        <Collapse><ChevronUp /></Collapse>
      </Ribbon>

      <FormulaBar>
        <NameBox>H5<Caret $s={3.5} /></NameBox>
        <Grip><GripDots h={16} /></Grip>
        <FxBox><CancelIcon /><CheckIcon /><FxText>fx</FxText></FxBox>
        <FormulaInput><ChevronDown /></FormulaInput>
      </FormulaBar>

      <SheetArea>
        <Grid>
          <Corner><CornerTri /></Corner>
          {COLS.map((c, i) => <ColHead key={i}>{c}</ColHead>)}
          {ROWS.map(row => (
            <React.Fragment key={row.n}>
              <RowHead>{row.n}</RowHead>
              {COLS.map((c, i) => (
                <SheetCell key={i} value={row.cells[i]} fill={row.fill && i < 7} />
              ))}
            </React.Fragment>
          ))}
        </Grid>
        <VScroll>
          <ScrollBtn><TriUp /></ScrollBtn>
          <VThumb />
          <VTrack />
          <ScrollBtn><TriDown /></ScrollBtn>
        </VScroll>
      </SheetArea>

      <SheetBar>
        <SheetNav><NavTri $left /><NavTri /></SheetNav>
        <SheetTab>Sheet1</SheetTab>
        <AddSheet><AddCircle /></AddSheet>
        <HGrip><GripDots h={16} /></HGrip>
        <HScroll>
          <ScrollBtn $w={25}><TriLeft /></ScrollBtn>
          <HThumb />
          <VTrack />
          <ScrollBtn $w={25}><TriRight /></ScrollBtn>
        </HScroll>
      </SheetBar>

      <StatusBar>
        <StatusText>就绪</StatusText>
        <StatusRight>
          <ViewBtn $on><NormalView /></ViewBtn>
          <ViewBtn><PageView /></ViewBtn>
          <ViewBtn><BreakView /></ViewBtn>
          <ZoomSign $ml={3}>−</ZoomSign>
          <ZoomTrack><ZoomThumb /></ZoomTrack>
          <ZoomSign>+</ZoomSign>
          <ZoomPct>100%</ZoomPct>
        </StatusRight>
      </StatusBar>
    </Window>
  )
}

export default App
